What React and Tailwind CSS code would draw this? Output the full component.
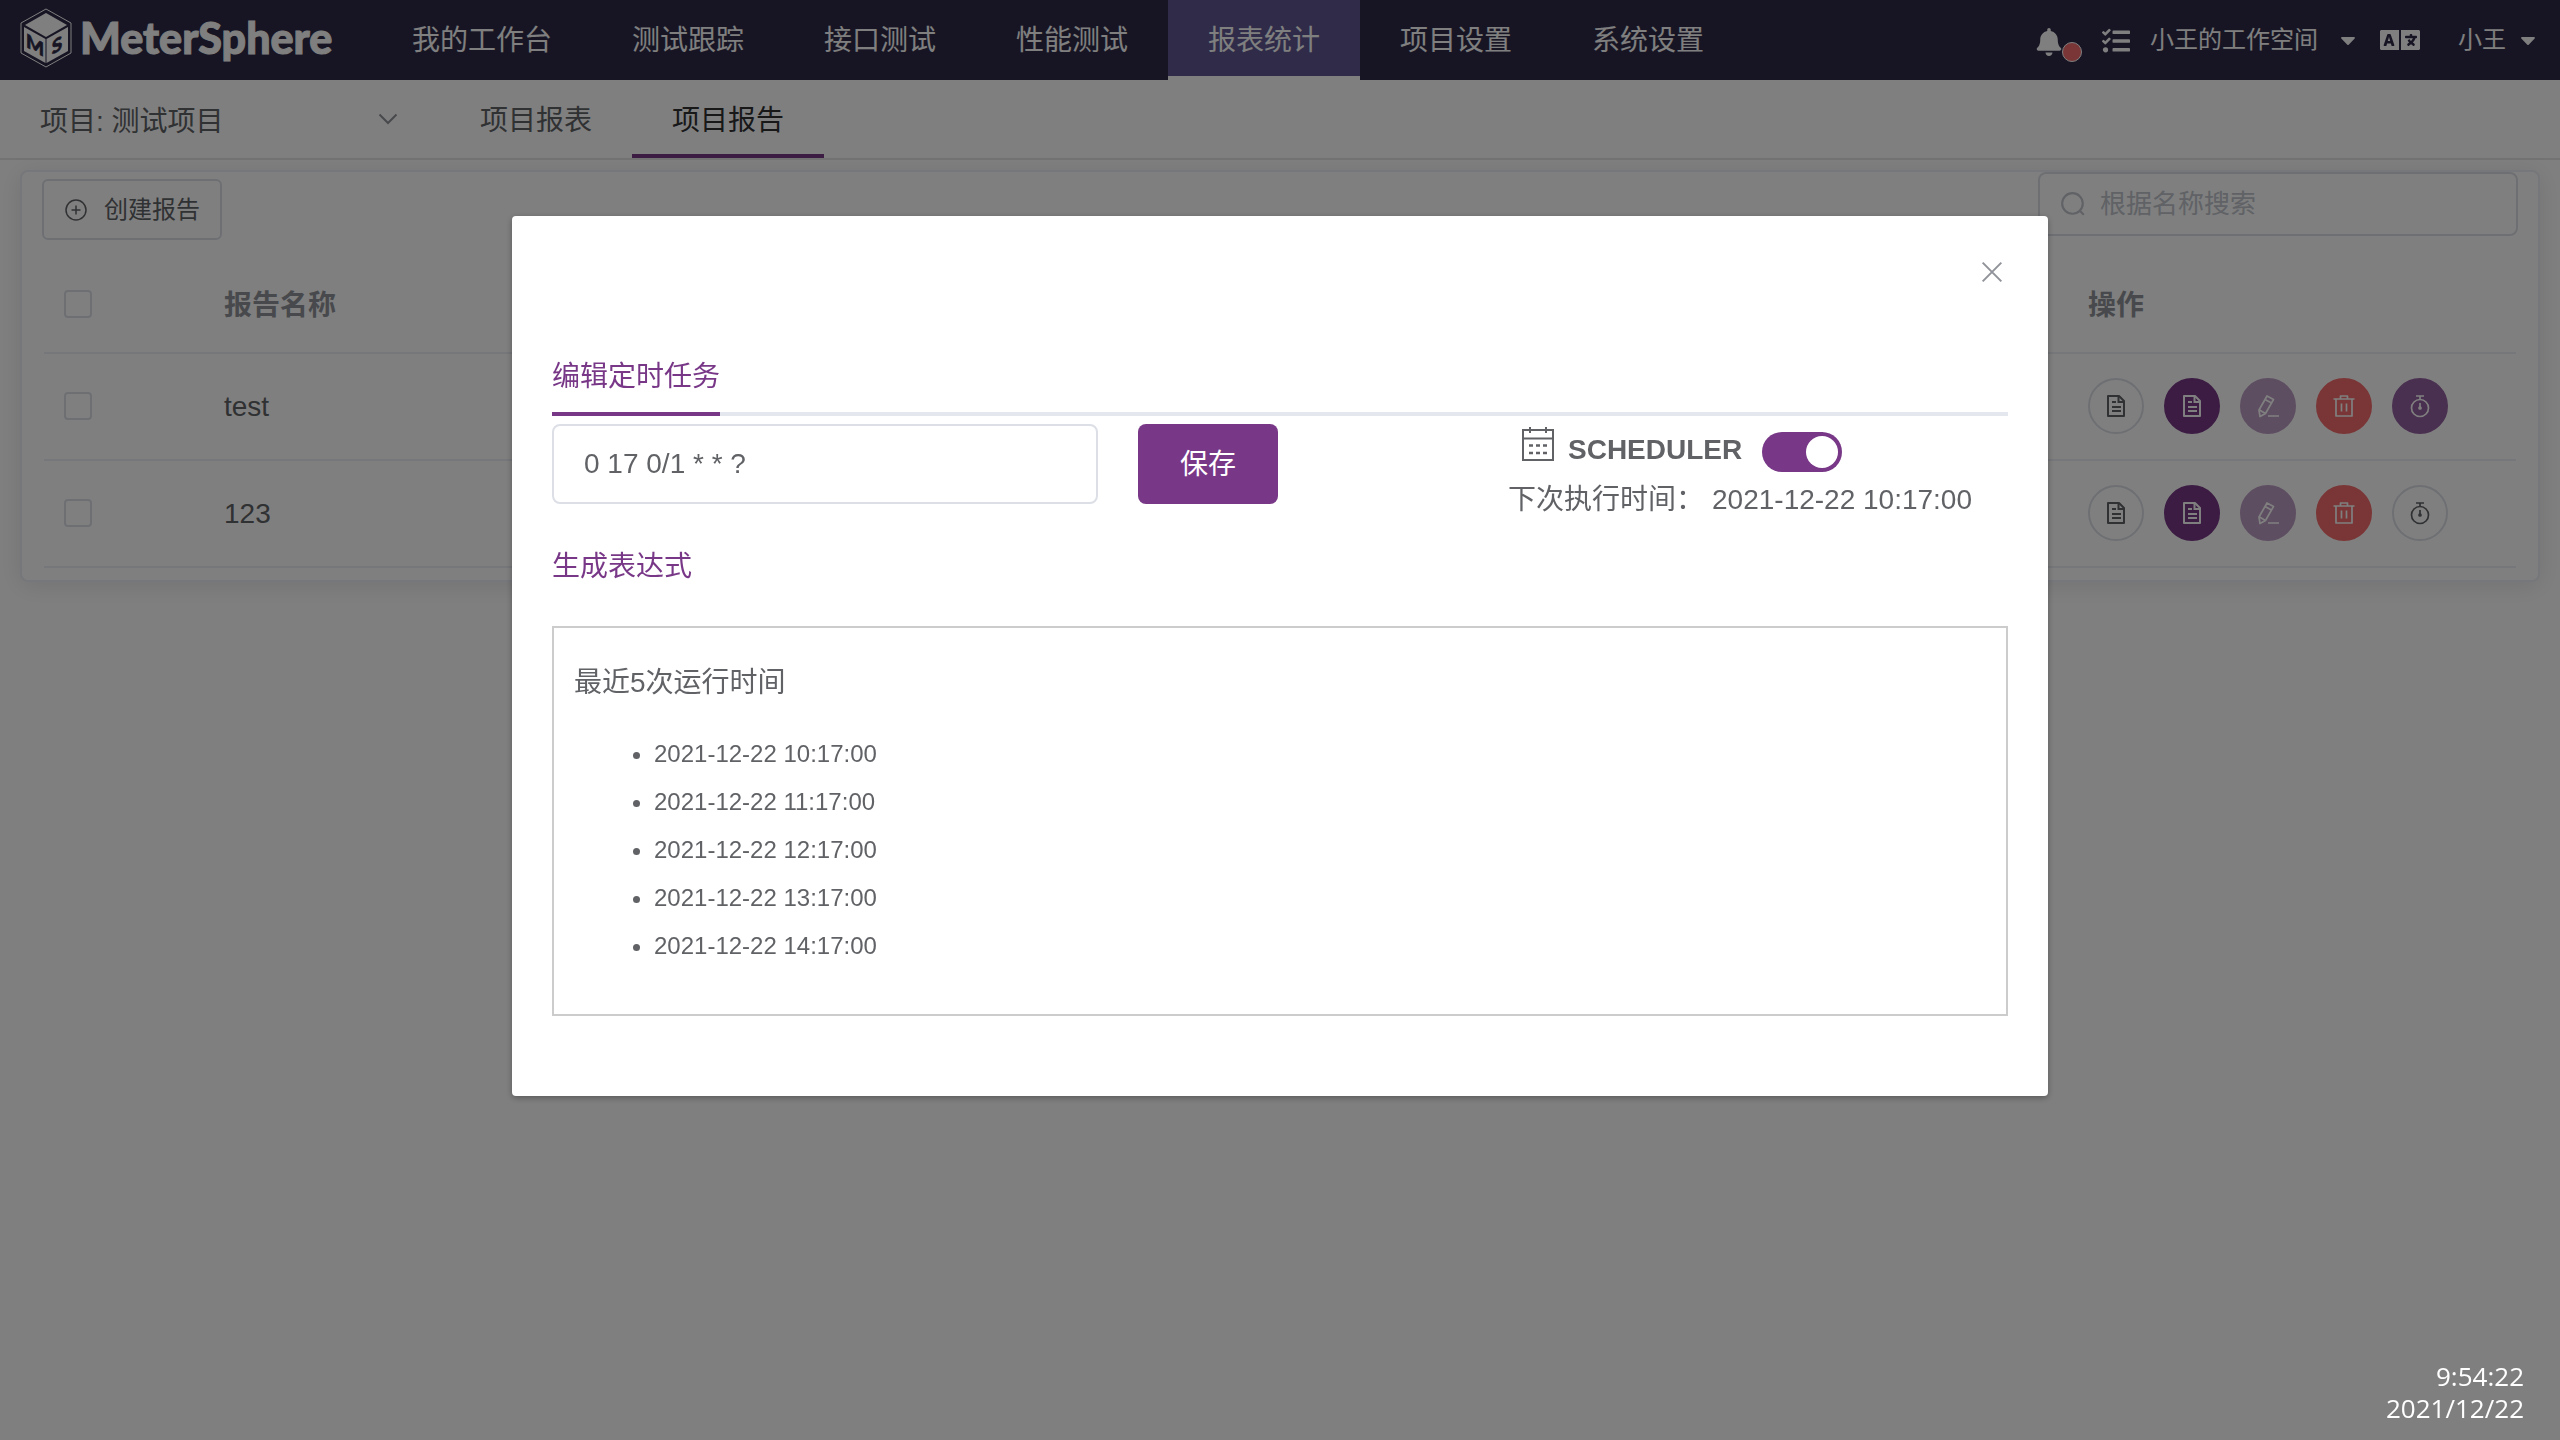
import { useState } from "react";
import { FaBell, FaCaretDown, FaLanguage, FaTasks } from "react-icons/fa";

const menus = ["我的工作台", "测试跟踪", "接口测试", "性能测试", "报表统计", "项目设置", "系统设置"];
const tabs = ["项目报表", "项目报告"];
const reports = [
  { id: 1, name: "test", scheduled: true },
  { id: 2, name: "123", scheduled: false }
];
const runTimes = [
  "2021-12-22 10:17:00",
  "2021-12-22 11:17:00",
  "2021-12-22 12:17:00",
  "2021-12-22 13:17:00",
  "2021-12-22 14:17:00"
];

const Icon = ({ children, className = "size-6", strokeWidth = 2 }) => (
  <svg
    viewBox="0 0 24 24"
    className={className}
    fill="none"
    stroke="currentColor"
    strokeWidth={strokeWidth}
    aria-hidden="true"
  >
    {children}
  </svg>
);

const DocumentIcon = () => (
  <Icon>
    <path d="M4 2h11l5 5v15H4z" strokeLinejoin="round" />
    <path d="M14.5 2v6H20M8 8h4M8 13h9M8 17h9" />
  </Icon>
);

const EditIcon = () => (
  <Icon strokeWidth={1.7}>
    <path d="M11 2l6.5 3.5-8 14L4 22.5l-1-6.5z" strokeLinejoin="round" />
    <path d="M9 5.5l6.5 3.5M3.5 16l6 3.5M12 22h11" />
  </Icon>
);

const DeleteIcon = () => (
  <Icon strokeWidth={1.7}>
    <path d="M1.5 5h21M4 5v17h16V5M8.5 5V2h7v3M9.5 9.5v8M14.5 9.5v8" strokeLinejoin="round" />
  </Icon>
);

const TimerIcon = () => (
  <Icon strokeWidth={1.7}>
    <circle cx="12" cy="14" r="8.5" />
    <path d="M8 2h8M12 2v3M12 9v4" />
    <circle cx="12" cy="14" r="1" />
  </Icon>
);

const LogoMark = () => (
  <svg viewBox="0 0 52 60" className="h-[60px] w-[52px]" aria-hidden="true">
    <path d="M26 1L51 15V45L26 59L1 45V15Z" fill="none" stroke="#fff" strokeWidth="1" />
    <path d="M26 5L47 17L26 29L5 17Z" fill="#fff" />
    <path d="M4 19L25.5 31V55L4 43Z" fill="#fff" />
    <path d="M48 19L26.5 31V55L48 43Z" fill="#fff" />
    <g
      fontFamily="Lato, sans-serif"
      fontWeight="900"
      fontSize="19"
      fill="#2e2b48"
      stroke="#2e2b48"
      strokeWidth="0.6"
      textAnchor="middle"
    >
      <text transform="translate(15 44) skewY(30)">M</text>
      <text transform="translate(37 44) skewY(-30)">S</text>
    </g>
  </svg>
);

const Header = () => (
  <header className="flex h-20 items-stretch bg-[#2e2b48] text-white">
    <a href="#home" className="flex w-[372px] shrink-0 items-center pb-1 pl-5">
      <LogoMark />
      <span className="pl-2 font-['Lato',sans-serif] text-[43px] leading-[56px] font-black [-webkit-text-stroke:1px_white]">
        MeterSphere
      </span>
    </a>
    <nav className="flex">
      {menus.map((menu) => (
        <a
          key={menu}
          href="#menu"
          className={
            menu === "报表统计"
              ? "flex items-center border-b-4 border-white bg-[#5e5792] px-10 pt-[6px] text-[28px]"
              : "flex items-center px-10 pt-[2px] text-[28px]"
          }
        >
          {menu}
        </a>
      ))}
    </nav>
    <div className="ml-auto flex items-center pr-5 text-2xl">
      <button type="button" aria-label="消息" className="relative mr-10 pt-1">
        <FaBell className="h-7 w-[26px]" />
        <span className="absolute top-[18px] left-[26px] size-5 rounded-full border border-white bg-[#f56c6c]" />
      </button>
      <button type="button" aria-label="任务中心" className="mr-5 pt-[2px]">
        <FaTasks className="size-7" />
      </button>
      <button type="button" className="flex items-center gap-[18px]">
        小王的工作空间
        <FaCaretDown className="size-6" />
      </button>
      <button type="button" aria-label="语言" className="mr-[38px] ml-5">
        <FaLanguage className="h-8 w-10" />
      </button>
      <button type="button" className="flex items-center gap-[10px]">
        小王
        <FaCaretDown className="size-6" />
      </button>
    </div>
  </header>
);

const ProjectBar = () => (
  <div className="flex h-20 border-b-2 border-[#e6e6e6]">
    <div className="flex w-[440px] items-center pl-10">
      <select
        aria-label="项目"
        className="w-[336px] appearance-none bg-transparent pt-[5px] text-[28px] text-[#606266]"
        defaultValue="test"
      >
        <option value="test">项目: 测试项目</option>
      </select>
      <Icon className="size-6 text-[#909399]">
        <path d="M3.5 7.5l8.5 8.5 8.5-8.5" />
      </Icon>
    </div>
    {tabs.map((tab) => (
      <a
        key={tab}
        href="#tab"
        className={
          tab === "项目报告"
            ? "flex items-center border-b-4 border-[#783887] px-10 pt-2 text-[28px] text-[#303133]"
            : "flex items-center px-10 pt-1 text-[28px] text-[#606266]"
        }
      >
        {tab}
      </a>
    ))}
  </div>
);

const Checkbox = ({ label }) => (
  <input
    type="checkbox"
    aria-label={label}
    className="block size-7 appearance-none rounded-sm border-2 border-[#dcdfe6] bg-white"
  />
);

const RoundButton = ({ label, className, children }) => (
  <button
    type="button"
    aria-label={label}
    className={`flex size-14 items-center justify-center rounded-full border-2 ${className}`}
  >
    {children}
  </button>
);

const ReportTable = () => (
  <table className="w-full table-fixed border-separate border-spacing-0 text-[28px] text-[#606266]">
    <colgroup>
      <col className="w-[100px]" />
      <col className="w-[60px]" />
      <col />
      <col className="w-[448px]" />
    </colgroup>
    <thead className="text-[#909399]">
      <tr className="h-[98px]">
        <th className="border-b-2 border-[#ebeef5] px-5"><Checkbox label="全选" /></th>
        <th className="border-b-2 border-[#ebeef5]" />
        <th className="border-b-2 border-[#ebeef5] px-5 pt-1 text-left font-bold">报告名称</th>
        <th className="border-b-2 border-[#ebeef5] px-5 pt-1 text-left font-bold">操作</th>
      </tr>
    </thead>
    <tbody>
      {reports.map((report) => (
        <tr key={report.id} className="h-[107px]">
          <td className="border-b-2 border-[#ebeef5] px-5 pb-[2px]"><Checkbox label={report.name} /></td>
          <td className="border-b-2 border-[#ebeef5]" />
          <td className="border-b-2 border-[#ebeef5] px-5">{report.name}</td>
          <td className="border-b-2 border-[#ebeef5] px-5 pb-[2px]">
            <div className="flex gap-5">
              <RoundButton label="查看" className="border-[#dcdfe6]"><DocumentIcon /></RoundButton>
              <RoundButton label="报告" className="border-[#783887] bg-[#783887] text-white"><DocumentIcon /></RoundButton>
              <RoundButton label="编辑" className="border-[#bc9cc3] bg-[#bc9cc3] text-white"><EditIcon /></RoundButton>
              <RoundButton label="删除" className="border-[#f56c6c] bg-[#f56c6c] text-white"><DeleteIcon /></RoundButton>
              <RoundButton
                label="定时任务"
                className={report.scheduled ? "border-[#9360a0] bg-[#9360a0] text-white" : "border-[#dcdfe6]"}
              >
                <TimerIcon />
              </RoundButton>
            </div>
          </td>
        </tr>
      ))}
    </tbody>
  </table>
);

const ReportCard = () => (
  <main className="mx-5 mt-[10px] rounded-lg border-2 border-[#ebeef5] bg-white px-[22px] pb-3 shadow-[0_4px_24px_rgba(0,0,0,0.1)]">
    <div className="-mx-[2px] flex h-[84px] items-start justify-between">
      <button
        type="button"
        className="mt-[7px] flex h-[61px] items-center gap-4 rounded-md border-2 border-[#dcdfe6] px-5 text-2xl text-[#606266]"
      >
        <Icon strokeWidth={1.5}>
          <circle cx="12" cy="12" r="10" />
          <path d="M12 7.5v9M7.5 12h9" />
        </Icon>
        创建报告
      </button>
      <label className="flex h-16 w-[480px] items-center gap-[14px] rounded-lg border-2 border-[#dcdfe6] px-5">
        <Icon className="size-[26px] text-[#c0c4cc]">
          <circle cx="11.5" cy="11.5" r="9.5" />
          <path d="M18 18l4 4" />
        </Icon>
        <input
          type="text"
          aria-label="搜索"
          placeholder="根据名称搜索"
          className="min-w-0 flex-1 text-[26px] outline-none placeholder:text-[#c0c4cc]"
        />
      </label>
    </div>
    <ReportTable />
  </main>
);

const CalendarIcon = () => (
  <svg viewBox="0 0 36 36" className="size-9" fill="none" stroke="currentColor" strokeWidth="2" aria-hidden="true">
    <path d="M3 4h30v30H3zM3 12.5h30M10 1v6M26 1v6" />
    <path d="M9 19.5h4M16 19.5h4M23 19.5h4M9 27h4M16 27h4M23 27h4" strokeWidth="2.5" />
  </svg>
);

const ScheduleDialog = () => {
  const [cron, setCron] = useState("0 17 0/1 * * ?");
  const [enabled, setEnabled] = useState(true);

  return (
    <div
      role="dialog"
      aria-modal="true"
      aria-label="编辑定时任务"
      className="mt-[216px] w-3/5 rounded-sm bg-white px-10 pt-10 pb-20 text-[28px] text-[#606266] shadow-[0_2px_6px_rgba(0,0,0,0.3)]"
    >
      <div className="flex h-[93px] justify-end">
        <button type="button" aria-label="关闭" className="size-8 text-[#909399]">
          <Icon className="size-8">
            <path d="M5 5l14 14M19 5L5 19" strokeWidth="1.5" />
          </Icon>
        </button>
      </div>
      <div className="flex h-[67px] border-b-4 border-[#e4e7ed]">
        <button type="button" className="-mb-1 flex items-start border-b-4 border-[#783887] pt-[7px] text-[#783887]">
          编辑定时任务
        </button>
      </div>

      <div className="mt-2 flex items-start">
        <input
          type="text"
          aria-label="Cron 表达式"
          value={cron}
          onChange={(event) => setCron(event.target.value)}
          className="h-20 w-[546px] rounded-lg border-2 border-[#dcdfe6] px-[30px]"
        />
        <button type="button" className="ml-10 h-20 rounded-lg bg-[#783887] px-[42px] pt-[2px] text-white">
          保存
        </button>
        <div className="ml-auto w-[500px]">
          <label className="flex h-[55px] items-start pl-3">
            <span className="pt-[2px]"><CalendarIcon /></span>
            <span className="pl-3 leading-[51px] font-bold">SCHEDULER</span>
            <input
              type="checkbox"
              role="switch"
              checked={enabled}
              onChange={(event) => setEnabled(event.target.checked)}
              className="mt-2 ml-5 flex h-10 w-20 appearance-none items-center rounded-full bg-[#dcdfe6] p-1 before:size-8 before:rounded-full before:bg-white checked:justify-end checked:bg-[#783887]"
            />
          </label>
          <p className="flex gap-2 leading-[42px]">
            <span>下次执行时间：</span>
            <span>2021-12-22 10:17:00</span>
          </p>
        </div>
      </div>

      <a href="#generate" className="mt-[25px] block text-[#783887]">生成表达式</a>

      <section className="mt-[38px] h-[390px] border-2 border-[#ccc] px-5 pt-[34px]">
        <h2>最近5次运行时间</h2>
        <ul className="mt-[26px] list-disc pl-20 text-2xl leading-[48px]">
          {runTimes.map((time) => (
            <li key={time}>{time}</li>
          ))}
        </ul>
      </section>
    </div>
  );
};

const App = () => (
  <div className="min-h-screen bg-white font-['Liberation_Sans','Noto_Sans_CJK_SC',sans-serif]">
    <Header />
    <ProjectBar />
    <ReportCard />
    <div className="fixed inset-0 flex items-start justify-center bg-black/50">
      <ScheduleDialog />
      <div className="absolute right-9 bottom-4 text-right font-['Open_Sans',sans-serif] text-[26px] leading-8 text-white">
        <div>9:54:22</div>
        <div>2021/12/22</div>
      </div>
    </div>
  </div>
);

export default App;
